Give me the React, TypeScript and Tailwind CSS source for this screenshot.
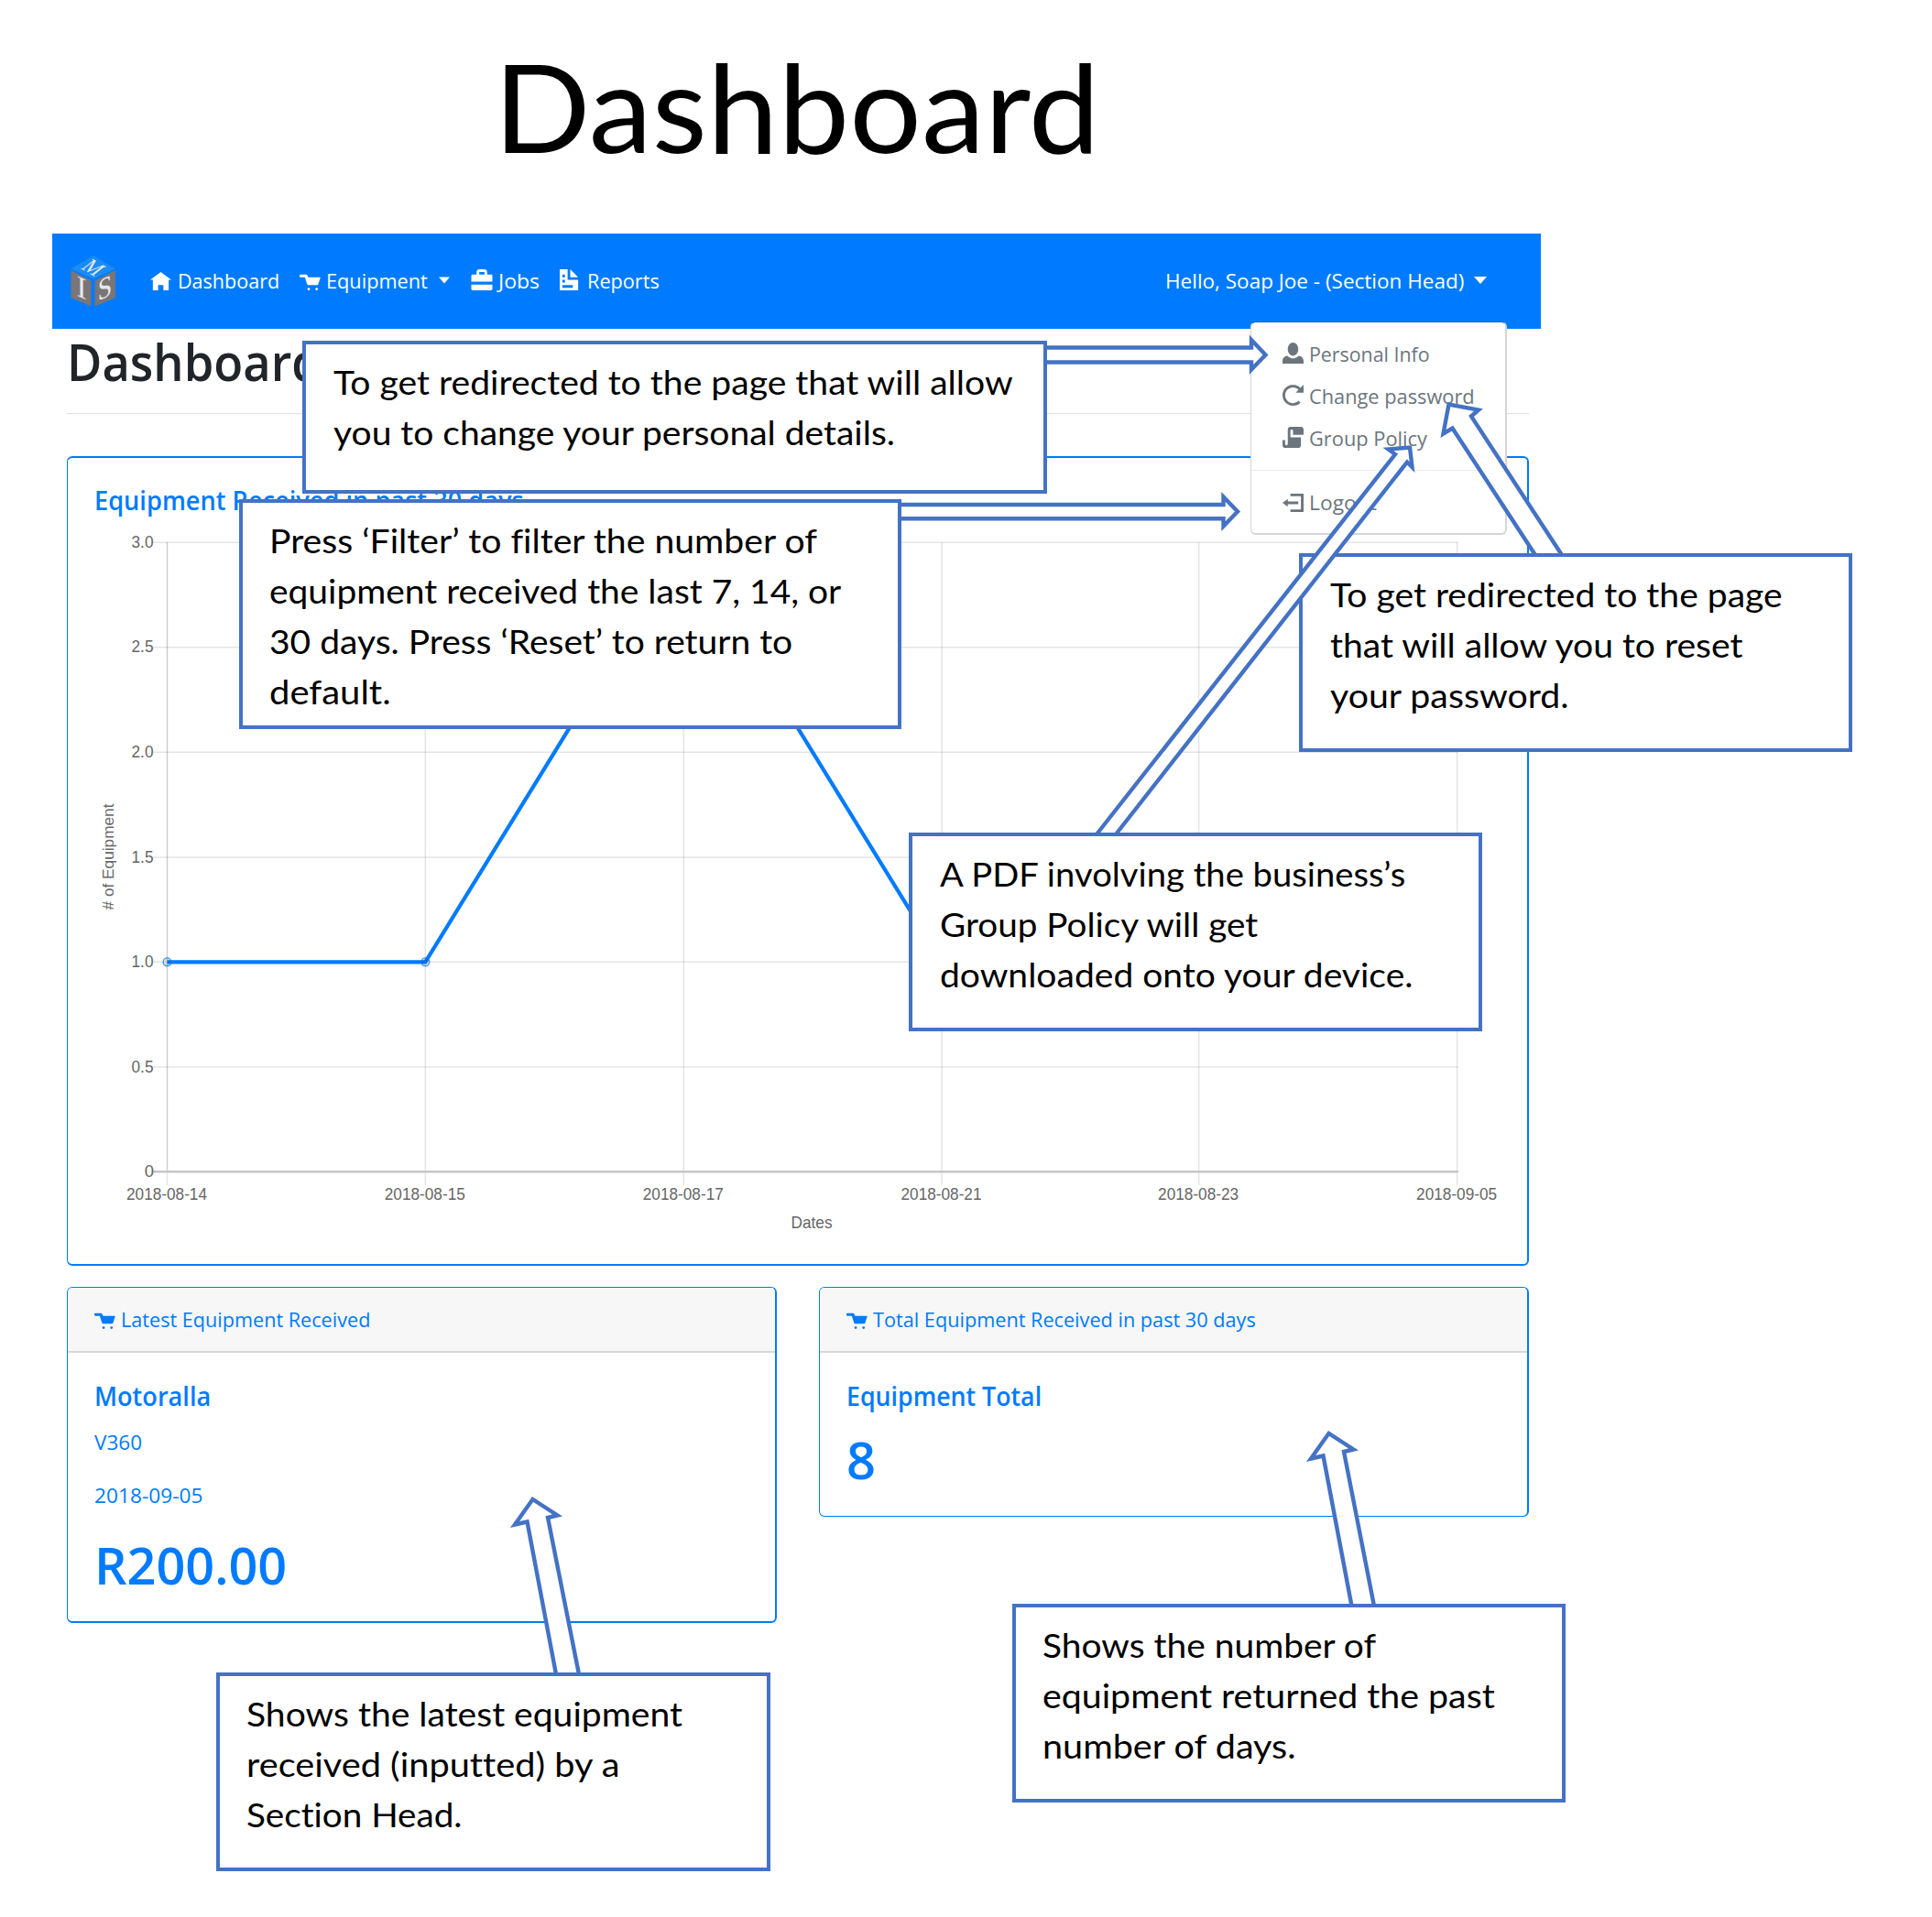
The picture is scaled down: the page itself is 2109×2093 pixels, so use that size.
import { useLayoutEffect, useRef } from "react";
import type { ReactNode } from "react";

/* Single line of text condensed or stretched to the width of its box. */
function Fit({ className, children }: { className: string; children: ReactNode }) {
  const box = useRef<HTMLDivElement>(null);
  const text = useRef<HTMLSpanElement>(null);
  useLayoutEffect(() => {
    if (!box.current || !text.current) return;
    const ratio = box.current.clientWidth / text.current.offsetWidth;
    text.current.style.transform = `scaleX(${ratio})`;
  });
  return (
    <div ref={box} className={`shrink-0 whitespace-nowrap ${className}`}>
      <span ref={text} className="inline-block origin-left align-top">
        {children}
      </span>
    </div>
  );
}

const icons = {
  home: "M4 1l-4 3h1v4h2v-2h2v2h2v-4.03l1 .03-4-3z",
  cart: "M.34 2a.5.5 0 0 0 .16 1h1.5l.09.25.41 1.25.41 1.25c.04.13.21.25.34.25h3.5c.14 0 .3-.12.34-.25l.81-2.5c.04-.13-.02-.25-.16-.25h-4.44l-.38-.72a.5.5 0 0 0-.44-.28h-2a.5.5 0 0 0-.09 0 .5.5 0 0 0-.06 0zm3.16 5c-.28 0-.5.22-.5.5s.22.5.5.5.5-.22.5-.5-.22-.5-.5-.5zm3 0c-.28 0-.5.22-.5.5s.22.5.5.5.5-.22.5-.5-.22-.5-.5-.5z",
  briefcase:
    "M3 0c-.55 0-1 .45-1 1v1h-1.5c-.28 0-.5.22-.5.5v2.2h8v-2.2c0-.28-.22-.5-.5-.5h-1.5v-1c0-.55-.45-1-1-1h-2zm0 1h2v1h-2v-1zm-3 4.8v1.7c0 .28.22.5.5.5h7c.28 0 .5-.22.5-.5v-1.7h-8z",
  document:
    "M0 0v8h7v-4h-4v-4h-3zm4 0v3h3l-3-3zm-3 2h1v1h-1v-1zm0 2h1v1h-1v-1zm0 2h4v1h-4v-1z",
  person:
    "M4 0c-1.1 0-2 1.12-2 2.5s.9 2.5 2 2.5 2-1.12 2-2.5-.9-2.5-2-2.5zm-2.09 5c-1.06.05-1.91.92-1.91 2v1h8v-1c0-1.08-.84-1.95-1.91-2-.54.61-1.28 1-2.09 1-.81 0-1.55-.39-2.09-1z",
  reload:
    "M4 0c-2.2 0-4 1.8-4 4s1.8 4 4 4c1.1 0 2.12-.43 2.84-1.16l-.72-.72c-.54.54-1.29.88-2.13.88-1.66 0-3-1.34-3-3s1.34-3 3-3c.83 0 1.55.36 2.09.91l-1.09 1.09h3v-3l-1.19 1.19c-.72-.72-1.71-1.19-2.81-1.19z",
  script:
    "M3 0c-.55 0-1 .45-1 1v5.5c0 .28-.22.5-.5.5s-.5-.22-.5-.5v-1.5h-1v2c0 .55.45 1 1 1h5c.55 0 1-.45 1-1v-3h-4v-2.5c0-.28.22-.5.5-.5s.5.22.5.5v1.5h4v-2c0-.55-.45-1-1-1h-4z",
  logout: "M3 1v1h4v5h-4v1h5v-7h-5zm-1 2l-2 1.5 2 1.5v-1h4v-1h-4v-1z",
};

function Icon({ name, className = "" }: { name: keyof typeof icons; className?: string }) {
  return (
    <svg viewBox="0 0 8 8" className={`size-[23px] shrink-0 fill-current ${className}`}>
      <path d={icons[name]} />
    </svg>
  );
}

function Caret({ className }: { className: string }) {
  return (
    <svg viewBox="0 0 14 8" className={`h-2 shrink-0 fill-white ${className}`}>
      <path d="M0 0h14L7 8z" />
    </svg>
  );
}

function Logo() {
  return (
    <svg viewBox="0 0 50 56" className="ml-5 h-14 w-[50px] shrink-0">
      <path d="M25 0L49 14.5L25 25.5L0.5 14.5Z" fill="#1a8cf5" />
      <path d="M0.5 16L22.5 27.5V55.5L0.5 46Z" fill="#7b7576" />
      <path d="M26.5 27.5L49 16V46L26.5 55.5Z" fill="#7b7576" />
      <g fill="#e4e8ec" fontFamily="Liberation Serif, serif" textAnchor="middle">
        <text fontSize="33" transform="matrix(1 0.45 0 1 12 46)">I</text>
        <text fontSize="33" transform="matrix(0.85 -0.4 0 1 37.5 46)">S</text>
        <text fontSize="21" transform="matrix(0.85 0.5 -0.95 0.75 18.5 18.5)">M</text>
      </g>
    </svg>
  );
}

function NavBar() {
  return (
    <header className="ml-[57px] flex h-[104px] w-[1625px] items-center bg-[#007bff] text-[22.5px] leading-[34px] text-white">
      <Logo />
      <Icon name="home" className="-mt-[3px] ml-[37px]" />
      <Fit className="ml-[7px] w-[111px]">Dashboard</Fit>
      <Icon name="cart" className="-mt-[3px] ml-[22px]" />
      <Fit className="ml-[6px] w-[111px]">Equipment</Fit>
      <Caret className="-mt-[2px] ml-3 w-[12px]" />
      <Icon name="briefcase" className="-mt-[3px] ml-[23px] w-[24px]" />
      <Fit className="ml-[6px] w-[45px]">Jobs</Fit>
      <Icon name="document" className="-mt-[3px] ml-[22px]" />
      <Fit className="ml-[7px] w-[79px]">Reports</Fit>
      <Fit className="ml-auto w-[326px]">Hello, Soap Joe - (Section Head)</Fit>
      <Caret className="-mt-[2px] ml-[11px] mr-[59px] w-[14px]" />
    </header>
  );
}

function UserMenu() {
  return (
    <div className="absolute left-[1365px] top-[351px] h-[233px] w-[280px] rounded-md border border-b-2 border-r-2 border-[#d5d5d5] border-t-[#0068d8] bg-white pt-[11px] text-[22.5px] leading-[34px] text-[#6c757d]">
      <div className="flex h-[46px] items-center pl-[34px]">
        <Icon name="person" className="-mt-px" />
        <Fit className="ml-[6px] w-[132px] pt-px">Personal Info</Fit>
      </div>
      <div className="flex h-[46px] items-center pl-[34px]">
        <Icon name="reload" className="-mt-px" />
        <Fit className="ml-[6px] w-[181px] pt-px">Change password</Fit>
      </div>
      <div className="flex h-[46px] items-center pl-[34px]">
        <Icon name="script" className="-mt-px" />
        <Fit className="ml-[6px] w-[129px] pt-px">Group Policy</Fit>
      </div>
      <div className="my-3 h-px bg-[#e9ecef]" />
      <div className="flex h-[46px] items-center pl-[34px]">
        <Icon name="logout" className="-mt-[3px]" />
        <Fit className="ml-[6px] w-[74px]">Logout</Fit>
      </div>
    </div>
  );
}

const rows = [
  ["3.0", 592.3],
  ["2.5", 706.8],
  ["2.0", 821.3],
  ["1.5", 936],
  ["1.0", 1050.3],
  ["0.5", 1165],
] as const;
const columns = [
  ["2018-08-14", 182.5],
  ["2018-08-15", 464.3],
  ["2018-08-17", 746.3],
  ["2018-08-21", 1028],
  ["2018-08-23", 1308.6],
  ["2018-09-05", 1590.6],
] as const;

function Chart() {
  return (
    <svg viewBox="74 562 1593 817" className="h-[817px] w-[1593px]">
      <g stroke="#000" strokeOpacity="0.1" strokeWidth="1.5">
        {rows.map(([label, y]) => (
          <line key={label} x1="167" x2="1592" y1={y} y2={y} />
        ))}
        {columns.map(([label, x]) => (
          <line key={label} x1={x} x2={x} y1="592" y2="1294" />
        ))}
        <line x1="182.5" x2="182.5" y1="592" y2="1280" />
      </g>
      <line x1="167" x2="1592" y1="1279.3" y2="1279.3" stroke="#c6c6c6" strokeWidth="2.4" />
      <g fill="#666" fontFamily="Liberation Sans, Arial, sans-serif" fontSize="18.4">
        {rows.map(([label, y]) => (
          <text
            key={label}
            x="167.5"
            y={y + 5.5}
            textAnchor="end"
            textLength="24"
            lengthAdjust="spacingAndGlyphs"
          >
            {label}
          </text>
        ))}
        <text x="168" y="1285" textAnchor="end">0</text>
        {columns.map(([label, x]) => (
          <text
            key={label}
            x={x - 0.5}
            y="1310"
            textAnchor="middle"
            textLength="88"
            lengthAdjust="spacingAndGlyphs"
          >
            {label}
          </text>
        ))}
        <text x="886" y="1341" textAnchor="middle" textLength="45" lengthAdjust="spacingAndGlyphs">
          Dates
        </text>
        <text
          transform="translate(124 935.5) rotate(-90)"
          fontSize="17.25"
          textAnchor="middle"
          textLength="116"
          lengthAdjust="spacingAndGlyphs"
        >
          # of Equipment
        </text>
      </g>
      <path
        d="M182.5 1050.3H464.3L746.3 592.3L1028 1050.3H1590.6"
        fill="none"
        stroke="#007bff"
        strokeWidth="4.2"
      />
      <g fill="#000" fillOpacity="0.1" stroke="#007bff" strokeOpacity="0.75" strokeWidth="1.4">
        <circle cx="182.5" cy="1050.3" r="4.4" />
        <circle cx="464.3" cy="1050.3" r="4.4" />
      </g>
    </svg>
  );
}

function CardHeader({ children }: { children: ReactNode }) {
  return (
    <div className="flex h-[71px] items-center border-b-2 border-[#d7d9d9] bg-[#f7f7f7] pl-[29px] text-[22.5px] leading-[34px]">
      <Icon name="cart" className="-mt-[2px]" />
      {children}
    </div>
  );
}

/* Outline arrows that join a callout to the thing it explains. */
function Arrows({ paths }: { paths: string[] }) {
  return (
    <svg viewBox="0 0 2109 2093" className="absolute left-0 top-0 h-[2093px] w-[2109px]">
      {paths.map((d) => (
        <path key={d} d={d} fill="#fff" stroke="#4472c4" strokeWidth="4.4" strokeMiterlimit="8" />
      ))}
    </svg>
  );
}

function Callout({ className, children }: { className: string; children: ReactNode }) {
  return (
    <div
      className={`absolute border-4 border-[#4472c4] bg-white pt-[13px] font-['Lato',sans-serif] text-[37px] leading-[55px] text-black [font-variant-ligatures:none] ${className}`}
    >
      {children}
    </div>
  );
}

export default function App() {
  return (
    <div className="relative h-[2093px] w-[2109px] overflow-hidden bg-white font-['Open_Sans',sans-serif]">
      <h1 className="h-[255px] pl-[539px] pt-[36px] font-['Lato',sans-serif] text-[133px] leading-[160px] text-black">
        <Fit className="w-[662px]">Dashboard</Fit>
      </h1>
      <NavBar />
      <main className="ml-[73px] w-[1596px] text-[#007bff]">
        <h2 className="pt-px text-[56px] font-semibold leading-[68px] text-[#212529]">
          <Fit className="w-[278px]">Dashboard</Fit>
        </h2>
        <div className="mt-[23px] h-px bg-[#e2e2e2]" />
        <section className="mt-[46px] h-[884px] rounded-md border-2 border-l border-[#007bff] pt-[29px]">
          <h5 className="-mb-px pl-[29px] text-[28px] font-semibold leading-[34px]">
            <Fit className="w-[469px]">Equipment Received in past 30 days</Fit>
          </h5>
          <Chart />
        </section>
        <div className="mt-[23px] flex items-start justify-between">
          <section className="h-[367px] w-[775px] overflow-hidden rounded-md border border-b-2 border-r-2 border-[#007bff]">
            <CardHeader>
              <Fit className="ml-[6px] w-[272px]">Latest Equipment Received</Fit>
            </CardHeader>
            <div className="pl-[29px] pt-[30px]">
              <h5 className="text-[28px] font-semibold leading-[34px]">
                <Fit className="w-[127px]">Motoralla</Fit>
              </h5>
              <p className="mt-[17px] text-[22.5px] leading-[34px]">
                <Fit className="w-[52px]">V360</Fit>
              </p>
              <p className="mt-[24px] text-[22.5px] leading-[34px]">
                <Fit className="w-[118px]">2018-09-05</Fit>
              </p>
              <h2 className="mt-[24px] text-[56px] font-semibold leading-[68px]">
                <Fit className="w-[210px]">R200.00</Fit>
              </h2>
            </div>
          </section>
          <section className="h-[251px] w-[775px] overflow-hidden rounded-md border border-r-2 border-[#007bff]">
            <CardHeader>
              <Fit className="ml-[6px] w-[418px]">Total Equipment Received in past 30 days</Fit>
            </CardHeader>
            <div className="pl-[29px] pt-[30px]">
              <h5 className="text-[28px] font-semibold leading-[34px]">
                <Fit className="w-[213px]">Equipment Total</Fit>
              </h5>
              <h2 className="mt-[18px] text-[56px] font-semibold leading-[68px]">
                <Fit className="w-[32px]">8</Fit>
              </h2>
            </div>
          </section>
        </div>
      </main>

      <UserMenu />

      <Arrows
        paths={[
          "M1138 379.5H1366V371L1381.5 387.5L1366 403.5V395.5H1138",
          "M978 551H1335.5V542.5L1351 558.5L1335.5 574.5V566.3H978",
          "M1676 606L1585.5 467.5L1575.5 473.5L1581.5 441.5L1614 447.5L1606 454.5L1705 606",
          "M607 1828L575.5 1661.5L562 1664.5L581.5 1637L608.5 1654.5L598 1657L632 1828",
          "M1476 1756L1444.5 1589.5L1431 1592.5L1450.5 1565L1477.5 1582.5L1467 1585L1500.5 1756",
        ]}
      />
      <Callout className="left-[330px] top-[372px] h-[167px] w-[813px] pl-[30px]">
        <Fit className="w-[742px]">To get redirected to the page that will allow</Fit>
        <Fit className="w-[613px]">you to change your personal details.</Fit>
      </Callout>
      <Callout className="left-[261px] top-[545px] h-[251px] w-[723px] pl-[29px]">
        <Fit className="w-[598px]">Press ‘Filter’ to filter the number of</Fit>
        <Fit className="w-[624px]">equipment received the last 7, 14, or</Fit>
        <Fit className="w-[571px]">30 days. Press ‘Reset’ to return to</Fit>
        <Fit className="w-[133px]">default.</Fit>
      </Callout>
      <Callout className="left-[1418px] top-[604px] h-[217px] w-[604px] pl-[30px]">
        <Fit className="w-[494px]">To get redirected to the page</Fit>
        <Fit className="w-[451px]">that will allow you to reset</Fit>
        <Fit className="w-[260px]">your password.</Fit>
      </Callout>
      <Callout className="left-[236px] top-[1826px] h-[217px] w-[605px] pl-[29px]">
        <Fit className="w-[476px]">Shows the latest equipment</Fit>
        <Fit className="w-[407px]">received (inputted) by a</Fit>
        <Fit className="w-[235px]">Section Head.</Fit>
      </Callout>
      <Callout className="left-[1105px] top-[1751px] h-[217px] w-[604px] pl-[29px]">
        <Fit className="w-[364px]">Shows the number of</Fit>
        <Fit className="w-[494px]">equipment returned the past</Fit>
        <Fit className="w-[277px]">number of days.</Fit>
      </Callout>
      <Arrows paths={["M1197 911L1523 496L1515.5 490.5L1539 488.5L1541.5 510L1536 504.5L1218 911"]} />
      <Callout className="left-[992px] top-[909px] h-[217px] w-[626px] pl-[30px]">
        <Fit className="w-[508px]">A PDF involving the business’s</Fit>
        <Fit className="w-[347px]">Group Policy will get</Fit>
        <Fit className="w-[517px]">downloaded onto your device.</Fit>
      </Callout>
    </div>
  );
}
